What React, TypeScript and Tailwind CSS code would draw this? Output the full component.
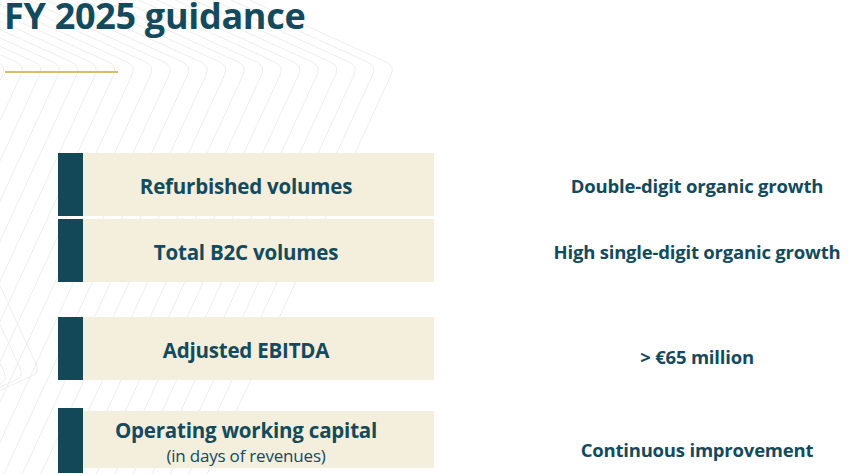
import React from 'react';

const rows = [
  { label: 'Refurbished volumes', value: 'Double-digit organic growth', gap: 'mt-0', valueShift: 'pt-[2px]' },
  { label: 'Total B2C volumes', value: 'High single-digit organic growth', gap: 'mt-[3px]', valueShift: 'pt-[2px]' },
  { label: 'Adjusted EBITDA', value: '> €65 million', gap: 'mt-[35px]', valueShift: 'pt-[17px]' },
];

const Chevrons: React.FC = () => {
  const lines = [];
  for (let i = 0; i < 24; i++) {
    const ax = 395 - i * 18.5;
    const ay = 66;
    lines.push(
      <path
        key={i}
        d={`M ${ax - 260} ${ay - 118} L ${ax - 9} ${ay - 4} Q ${ax} ${ay} ${ax - 4} ${ay + 9} L ${ax - 230} ${ay + 500}`}
      />
    );
  }
  for (let i = 0; i < 10; i++) {
    const ax = 40 - i * 16;
    const ay = 372 + i * 4;
    lines.push(
      <path
        key={`b${i}`}
        d={`M ${ax - 120} ${ay - 260} L ${ax - 4} ${ay - 8} Q ${ax} ${ay} ${ax - 8} ${ay + 4} L ${ax - 200} ${ay + 90}`}
      />
    );
  }
  return (
    <svg className="absolute inset-0" width="855" height="474" fill="none" stroke="#ededed" strokeWidth="1">
      {lines}
    </svg>
  );
};

const App: React.FC = () => {
  return (
    <div className="relative w-[855px] h-[474px] overflow-hidden bg-white text-[#134a5c] font-['Open_Sans',sans-serif]">
      <Chevrons />

      {/* Title */}
      <div className="relative pl-[4px]">
        <h1 className="text-[36px] leading-[32px] font-bold tracking-[-0.3px]">FY 2025 guidance</h1>
        <div className="mt-[39px] ml-[1px] w-[113px] h-[2px] bg-[#d6bd66]" />
      </div>

      {/* Guidance rows */}
      <div className="relative mt-[80px]">
        {rows.map((row) => (
          <div key={row.label} className={`flex ${row.gap}`}>
            <div className="ml-[58px] w-[376px] h-[63px] flex">
              <div className="w-[25px] bg-[#124858]" />
              <div className="flex-1 bg-[#f4eedd] flex items-center justify-center pr-[25px] pt-[3px]">
                <span className="text-[20.5px] font-bold tracking-[-0.2px]">{row.label}</span>
              </div>
            </div>
            <div className={`flex-1 pl-[105px] flex items-center justify-center ${row.valueShift}`}>
              <span className="text-[18.5px] font-bold tracking-[-0.2px]">{row.value}</span>
            </div>
          </div>
        ))}

        <div className="flex mt-[28px]">
          <div className="ml-[58px] w-[376px] h-[65px] flex">
            <div className="w-[25px] bg-[#124858]" />
            <div className="flex-1 mt-[3px] h-[57px] bg-[#f4eedd] flex flex-col items-center justify-center pr-[25px] pt-[3px]">
              <span className="text-[20.5px] leading-[28px] font-bold tracking-[-0.2px]">Operating working capital</span>
              <span className="text-[17px] leading-[23px] tracking-[-0.2px]">(in days of revenues)</span>
            </div>
          </div>
          <div className="flex-1 pl-[105px] pt-[18px] flex items-center justify-center">
            <span className="text-[18.5px] font-bold tracking-[-0.2px]">Continuous improvement</span>
          </div>
        </div>
      </div>
    </div>
  );
};

export default App;
